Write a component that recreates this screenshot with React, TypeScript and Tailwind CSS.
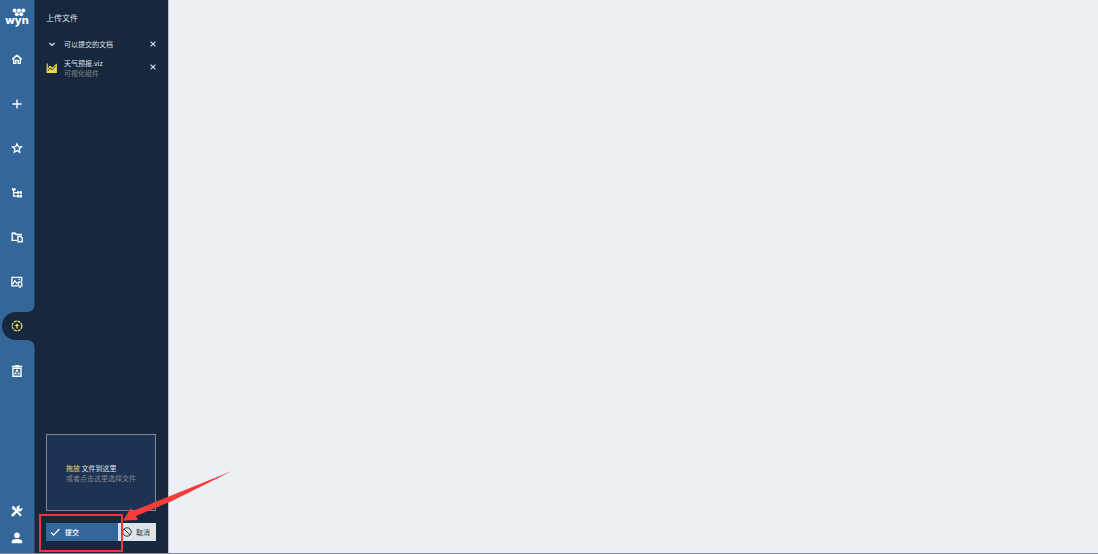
import type { ReactNode } from 'react'

type NavItem = {
  label: string
  icon: ReactNode
  active?: boolean
}

const stroke = {
  fill: 'none',
  stroke: 'currentColor',
  strokeWidth: 1.4,
} as const

const navItems: NavItem[] = [
  {
    label: '首页',
    icon: <path d="M1.2 6.4 6 2.2l4.8 4.2M2.7 5.4v5h2.1V7.4h2.4v3h2.1v-5" {...stroke} />,
  },
  {
    label: '新建',
    icon: <path d="M6 1.4v9.2M1.4 6h9.2" {...stroke} />,
  },
  {
    label: '收藏',
    icon: <path d="m6 1.8 1.3 2.9 3.2.3-2.4 2.1.7 3.1L6 8.6l-2.8 1.6.7-3.1L1.5 5l3.2-.3z" {...stroke} strokeWidth={1.3} />,
  },
  {
    label: '分类',
    icon: (
      <>
        <path d="M1 1.2h3.6v2.4H1zM6 4.2h2.2v2.6H6zM8.6 4.2H11v2.6H8.6zM6 7.8h2.2v2.6H6zM8.6 7.8H11v2.6H8.6z" fill="currentColor" />
        <path d="M2.6 3v6.2h3.6M2.6 5.6h3.6" {...stroke} strokeWidth={1.2} />
      </>
    ),
  },
  {
    label: '文档',
    icon: (
      <>
        <path d="M6 9.4H1.2V2.3h3l1 1.2h5v1.2" {...stroke} />
        <path d="M1 1.8h3.6l1 1.4H1z" fill="currentColor" />
        <path d="M7 5.4h2.6l1.6 1.7v3.7H7z" {...stroke} />
      </>
    ),
  },
  {
    label: '监控',
    icon: (
      <>
        <path d="M6.2 9.8H.9V1.4h9.8v4" {...stroke} strokeWidth={1.3} />
        <path d="m1.8 8.2 2-3.8 1.6 2.8 1.2-1M7.4 3.4h1.4" {...stroke} strokeWidth={1.2} />
        <path d="M6.2 10h5.4M7.2 9.8V7.6a1.8 1.8 0 0 1 3.6 0v2.2M8.2 11.3h1.6" {...stroke} strokeWidth={1.2} />
      </>
    ),
  },
  {
    label: '上传',
    active: true,
    icon: (
      <>
        <circle cx="6" cy="6" r="4.8" {...stroke} strokeWidth={1.3} strokeDasharray="2.9 .87" />
        <path d="M5.3 8.6V6H3.6L6 3.4 8.4 6H6.7v2.6z" fill="currentColor" />
      </>
    ),
  },
  {
    label: '回收站',
    icon: (
      <>
        <path d="M.8 1.5h10.4M4 .7h4" {...stroke} />
        <path d="M2 3.2h8v8.1H2z" {...stroke} />
        <path d="M6 4.7 8 8.7H4z" {...stroke} strokeWidth={1.1} strokeDasharray="2.6 .8" />
      </>
    ),
  },
]

function Icon({ children }: { children: ReactNode }) {
  return (
    <svg viewBox="0 0 12 12" className="size-3 shrink-0" aria-hidden="true">
      {children}
    </svg>
  )
}

function Logo() {
  return (
    <a href="#" className="flex h-[37px] flex-col items-center pt-2 text-white">
      <svg viewBox="0 0 14 9" className="-mr-1 h-[9px] w-[14px] shrink-0" fill="currentColor" aria-hidden="true">
        <circle cx="2.6" cy="2.4" r="2" />
        <circle cx="7" cy="2.4" r="2" />
        <circle cx="11.4" cy="2.4" r="2" />
        <circle cx="4.8" cy="6.3" r="2" />
        <circle cx="9.2" cy="6.3" r="2" />
      </svg>
      <span className="-mt-1 font-[Inter,sans-serif] text-[11px] leading-[14px] font-extrabold">wyn</span>
    </a>
  )
}

function NavButton({ item }: { item: NavItem }) {
  if (!item.active) {
    return (
      <button type="button" aria-label={item.label} className="flex w-full flex-1 items-center justify-center">
        <Icon>{item.icon}</Icon>
      </button>
    )
  }

  // The active tab melts into the panel with two concave corners
  return (
    <div className="flex flex-1 items-center">
      <button
        type="button"
        aria-label={item.label}
        aria-current="page"
        className="relative -mr-px ml-0.5 flex h-7 flex-1 items-center rounded-l-full bg-[#17273e] pl-[9px] text-[#e9dc62]"
      >
        <Icon>{item.icon}</Icon>
        <svg viewBox="0 0 8 8" className="absolute right-0 bottom-full size-2" fill="#17273e" aria-hidden="true">
          <path d="M8 0v8H0a8 8 0 0 0 8-8z" />
        </svg>
        <svg viewBox="0 0 8 8" className="absolute top-full right-0 size-2" fill="#17273e" aria-hidden="true">
          <path d="M8 8V0H0a8 8 0 0 1 8 8z" />
        </svg>
      </button>
    </div>
  )
}

function Sidebar() {
  return (
    <aside className="flex w-[35px] shrink-0 flex-col border-r border-[#25486d] bg-[#336699] text-white">
      <Logo />
      <nav className="flex h-[356px] flex-col">
        {navItems.map((item) => (
          <NavButton key={item.label} item={item} />
        ))}
      </nav>
      <div className="mt-auto flex flex-col items-center pb-0.5">
        <button type="button" aria-label="设置" className="flex h-7 items-center">
          <Icon>
            <path d="m1.4 1.3 1.2-.3 2 1.7v1.3l6.2 6-1.6 1.4-5.6-6.2-1.4-.1L.7 2.6z" fill="currentColor" />
            <path d="M11.3 2.6a3 3 0 0 1-4 3.7l-4.5 4.8a1.4 1.4 0 0 1-2-2L5.6 4.8A3 3 0 0 1 9.4.8L7.9 2.5l1.5 1.6z" fill="currentColor" />
          </Icon>
        </button>
        <button type="button" aria-label="用户" className="flex h-[26px] items-center">
          <Icon>
            <circle cx="6" cy="3.2" r="2.8" fill="currentColor" />
            <path d="M.8 11.2V9.4C.8 7.8 3.6 7 6 7s5.2.8 5.2 2.4v1.8z" fill="currentColor" />
          </Icon>
        </button>
      </div>
    </aside>
  )
}

function CloseButton({ label }: { label: string }) {
  return (
    <button type="button" aria-label={label} className="ml-auto text-[#dfe3e8]">
      <svg viewBox="0 0 6 6" className="size-1.5" fill="none" stroke="currentColor" strokeWidth="1.1" aria-hidden="true">
        <path d="m.6.6 4.8 4.8M5.4.6.6 5.4" />
      </svg>
    </button>
  )
}

// Red box and arrow that point at the submit button
function Callout() {
  return (
    <div className="pointer-events-none absolute -top-[9px] -left-[7px] h-[38px] w-[84px] border-2 border-[#f5333a]">
      <svg viewBox="0 0 110 54" className="absolute -top-[46px] left-[81px] h-[54px] w-[110px]" fill="#fb3a3a" aria-hidden="true">
        <path d="M110 1 48 26 11 41 9 38 1 50.5 16 50 14 46 50 31z" />
      </svg>
    </div>
  )
}

function UploadPanel() {
  return (
    <section className="flex w-[133px] shrink-0 flex-col bg-[#17273e] pr-3 pb-3 pl-[11px] text-[7px] leading-[10px] text-[#dfe3e8]">
      <h1 className="pt-3 text-[8px] leading-[12px]">上传文件</h1>

      <div className="mt-3.5 flex h-3 items-center">
        <button type="button" className="flex items-center gap-2" aria-expanded="true">
          <svg viewBox="0 0 10 10" className="size-2.5" fill="none" stroke="currentColor" strokeWidth="1.3" aria-hidden="true">
            <path d="m3.4 4 2.6 2.4L8.6 4" />
          </svg>
          可以提交的文档
        </button>
        <CloseButton label="全部移除" />
      </div>

      <div className="mt-2 flex h-5 items-center gap-[7px]">
        <svg viewBox="0 0 11 11" className="size-[11px]" fill="#ecd94f" aria-hidden="true">
          <path d="M.6.6h1.2v4.8l2-2.8 2.6 1.9L9.4 1.4l1.5-.8v9.3H.6z" />
          <path d="m1.8 8 2.2-3 2.3 1.8 3.4-4" fill="none" stroke="#17273e" strokeWidth=".9" />
        </svg>
        <div>
          <p>天气预报.viz</p>
          <p className="text-[#81858c]">可视化组件</p>
        </div>
        <div className="mb-0.5 ml-auto flex">
          <CloseButton label="移除 天气预报.viz" />
        </div>
      </div>

      <button
        type="button"
        className="mt-auto flex h-[77px] items-center justify-center border border-[#81858c] bg-[#1e3354] text-left"
      >
        <span>
          <span className="block">
            <span className="text-[#e9dc62]">拖放</span> 文件到这里
          </span>
          <span className="block text-[#81858c]">或者点击这里选择文件</span>
        </span>
      </button>

      <div className="relative mt-3 flex h-[18px]">
        <button type="button" className="flex w-[72px] items-center gap-[5px] bg-[#336699] pl-1 font-medium text-white">
          <svg viewBox="0 0 10 10" className="size-2.5" fill="none" stroke="currentColor" strokeWidth="1.3" aria-hidden="true">
            <path d="m1 5.5 2.6 2.6L9.3 2" />
          </svg>
          提交
        </button>
        <button type="button" className="flex flex-1 items-center gap-1 bg-[#dce5ec] pl-1 text-[#333333]">
          <svg viewBox="0 0 10 10" className="size-2.5" fill="none" stroke="currentColor" aria-hidden="true">
            <circle cx="5" cy="5" r="4.2" />
            <path d="m2 2 6 6" />
          </svg>
          取消
        </button>
        <Callout />
      </div>
    </section>
  )
}

export default function App() {
  return (
    <div className="flex min-h-screen overflow-hidden border-b border-[#858a9b] bg-[#ebf0f5] font-['Noto_Sans_CJK_SC',sans-serif]">
      <Sidebar />
      <UploadPanel />
      <main className="flex-1 border-l border-[#bcc5cf]" />
    </div>
  )
}
